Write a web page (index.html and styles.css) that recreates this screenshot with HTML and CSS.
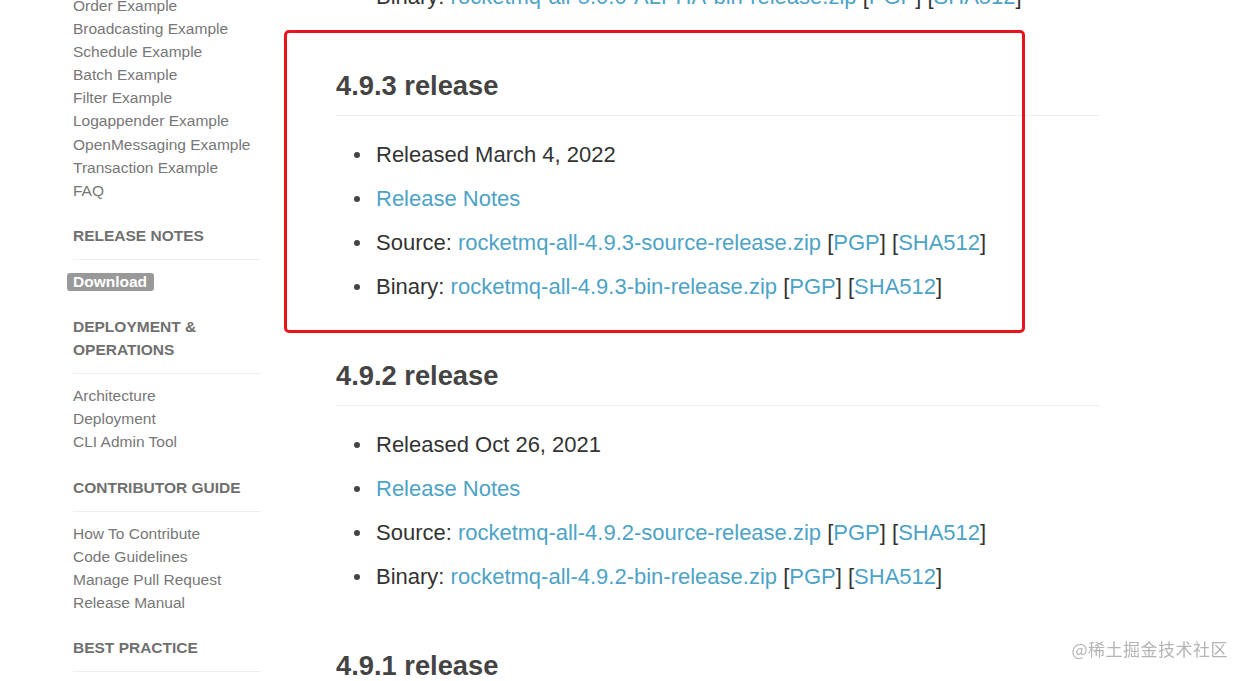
FILE: index.html
```html
<!DOCTYPE html>
<html lang="en">
<head>
  <meta charset="UTF-8" />
  <meta name="viewport" content="width=device-width, initial-scale=1.0">
  <title>RocketMQ Download</title>
  <link rel="stylesheet" href="styles.css">
</head>
<body>

  <div class="page">
    <nav class="sidebar">
      <ul class="nav-list">
        <li>Order Example</li>
        <li>Broadcasting Example</li>
        <li>Schedule Example</li>
        <li>Batch Example</li>
        <li>Filter Example</li>
        <li>Logappender Example</li>
        <li>OpenMessaging Example</li>
        <li>Transaction Example</li>
        <li>FAQ</li>
      </ul>

      <h3 class="nav-heading">Release Notes</h3>
      <ul class="nav-list">
        <li><span class="badge">Download</span></li>
      </ul>

      <h3 class="nav-heading">Deployment &amp; Operations</h3>
      <ul class="nav-list">
        <li>Architecture</li>
        <li>Deployment</li>
        <li>CLI Admin Tool</li>
      </ul>

      <h3 class="nav-heading">Contributor Guide</h3>
      <ul class="nav-list">
        <li>How To Contribute</li>
        <li>Code Guidelines</li>
        <li>Manage Pull Request</li>
        <li>Release Manual</li>
      </ul>

      <h3 class="nav-heading">Best Practice</h3>
    </nav>

    <main class="content">
      <ul class="release-list first">
        <li>Binary: <a href="#">rocketmq-all-5.0.0-ALPHA-bin-release.zip</a> [<a href="#">PGP</a>] [<a href="#">SHA512</a>]</li>
      </ul>

      <section class="release">
        <h2>4.9.3 release</h2>
        <ul class="release-list">
          <li>Released March 4, 2022</li>
          <li><a href="#">Release Notes</a></li>
          <li>Source: <a href="#">rocketmq-all-4.9.3-source-release.zip</a> [<a href="#">PGP</a>] [<a href="#">SHA512</a>]</li>
          <li>Binary: <a href="#">rocketmq-all-4.9.3-bin-release.zip</a> [<a href="#">PGP</a>] [<a href="#">SHA512</a>]</li>
        </ul>
      </section>

      <section class="release">
        <h2>4.9.2 release</h2>
        <ul class="release-list">
          <li>Released Oct 26, 2021</li>
          <li><a href="#">Release Notes</a></li>
          <li>Source: <a href="#">rocketmq-all-4.9.2-source-release.zip</a> [<a href="#">PGP</a>] [<a href="#">SHA512</a>]</li>
          <li>Binary: <a href="#">rocketmq-all-4.9.2-bin-release.zip</a> [<a href="#">PGP</a>] [<a href="#">SHA512</a>]</li>
        </ul>
      </section>

      <section class="release">
        <h2>4.9.1 release</h2>
      </section>
    </main>

    <div class="highlight-box"></div>
  </div>

  <div class="watermark">@稀土掘金技术社区</div>

</body>
</html>
```

FILE: styles.css
```css
* {
  margin: 0;
  padding: 0;
  box-sizing: border-box;
}

html, body {
  height: 100%;
  overflow: hidden;
}

body {
  background-color: #FFFFFF;
  color: #333333;
  font-family: "Liberation Sans", Arial, Helvetica, sans-serif;
}

.page {
  position: relative;
  display: flex;
  align-items: flex-start;
  gap: 75px;
  padding-left: 73px;
}

/* sidebar */

.sidebar {
  width: 188px;
  flex-shrink: 0;
  margin-top: -6px;
  font-size: 15.5px;
  line-height: 23.1px;
}

.nav-list {
  list-style: none;
  color: #777777;
}

.nav-heading {
  margin-top: 22px;
  padding-bottom: 12px;
  margin-bottom: 10px;
  border-bottom: 1px solid #EEEEEE;
  font-size: 15.5px;
  font-weight: 700;
  color: #6F6F6F;
  text-transform: uppercase;
  line-height: 23.1px;
}

.badge {
  display: inline-block;
  margin-left: -6px;
  padding: 0 7px 0 6px;
  background-color: #999999;
  color: #FFFFFF;
  font-weight: 700;
  border-radius: 3px;
  line-height: 18px;
}

/* main */

.content {
  width: 764px;
  padding-top: 1px;
}

.release h2 {
  font-size: 27.3px;
  font-weight: 700;
  color: #444444;
  line-height: 36px;
  padding-bottom: 11px;
  border-bottom: 1px solid #EEEEEE;
}

.release-list {
  margin: 23px 0 55px;
  padding-left: 40px;
  font-size: 22px;
  line-height: 32px;
  list-style: none;
}

.release-list.first {
  margin-top: -20px;
}

.release-list li {
  position: relative;
}

.release-list li::before {
  content: "";
  position: absolute;
  left: -22px;
  top: 13px;
  width: 6px;
  height: 6px;
  border-radius: 50%;
  background-color: #444444;
}

.release-list li + li {
  margin-top: 12px;
}

.release-list a {
  color: #4DA3C6;
  text-decoration: none;
}

/* annotation */

.highlight-box {
  position: absolute;
  left: 284px;
  top: 30px;
  width: 741px;
  height: 303px;
  border: 3px solid #E8131B;
  border-radius: 5px;
  pointer-events: none;
}

.watermark {
  position: fixed;
  right: 20px;
  bottom: 20px;
  font-family: "Noto Sans CJK SC", "Liberation Sans", sans-serif;
  font-size: 17px;
  color: #B4B4B4;
  letter-spacing: 0.5px;
}
```
